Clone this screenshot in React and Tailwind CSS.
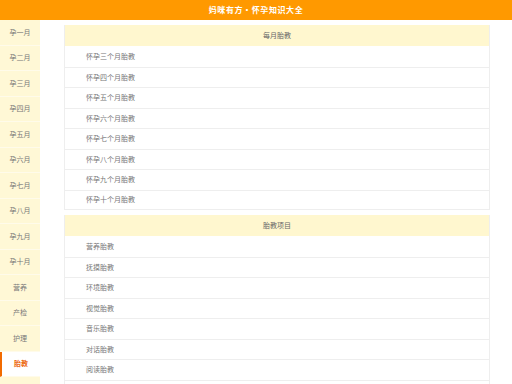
import React from 'react';

const menu = ['孕一月', '孕二月', '孕三月', '孕四月', '孕五月', '孕六月', '孕七月', '孕八月', '孕九月', '孕十月', '营养', '产检', '护理', '胎教', ''];

const sections = [
    {
        title: '每月胎教',
        items: ['怀孕三个月胎教', '怀孕四个月胎教', '怀孕五个月胎教', '怀孕六个月胎教', '怀孕七个月胎教', '怀孕八个月胎教', '怀孕九个月胎教', '怀孕十个月胎教'],
    },
    {
        title: '胎教项目',
        items: ['营养胎教', '抚摸胎教', '环境胎教', '视觉胎教', '音乐胎教', '对话胎教', '阅读胎教', ''],
    },
];

const App = () => {
    return (
        <div className="w-[512px] h-[384px] overflow-hidden bg-white flex flex-col" style={{ fontFamily: '"Noto Sans CJK SC", "Noto Sans", sans-serif' }}>
            {/* 顶部标题 */}
            <div className="h-[20px] shrink-0 bg-[#ff9900] flex items-center justify-center">
                <span className="text-white text-[8px] font-bold tracking-[0.6px] leading-none">妈咪有方•怀孕知识大全</span>
            </div>

            <div className="flex flex-1 min-h-0">
                {/* 左侧菜单 */}
                <div className="w-[40px] shrink-0 bg-[#fff8d6] flex flex-col">
                    {menu.map((m, i) => (
                        <div
                            key={i}
                            className={`h-[25.5px] shrink-0 flex items-center justify-center text-[7px] leading-none border-b border-[#fffbea] ${
                                m === '胎教' ? 'bg-white border-l-2 border-l-[#f26b00] text-[#ec6a12] font-bold' : 'text-[#777]'
                            }`}
                        >
                            {m}
                        </div>
                    ))}
                </div>

                {/* 内容 */}
                <div className="flex-1 pl-[24px] pr-[22px] pt-[5px] flex flex-col gap-[5px]">
                    {sections.map((s) => (
                        <div key={s.title} className="border-x border-[#eeeeee] shrink-0">
                            <div className="h-[21px] bg-[#fff7cf] flex items-center justify-center text-[7px] text-[#666] leading-none">
                                {s.title}
                            </div>
                            {s.items.map((it, i) => (
                                <div
                                    key={i}
                                    className={`h-[20.5px] flex items-center pl-[21px] text-[7px] text-[#777] leading-none border-[#eeeeee] ${i > 0 ? 'border-t' : ''} ${i === s.items.length - 1 ? 'border-b' : ''}`}
                                >
                                    {it}
                                </div>
                            ))}
                        </div>
                    ))}
                </div>
            </div>
        </div>
    );
};

export default App;
